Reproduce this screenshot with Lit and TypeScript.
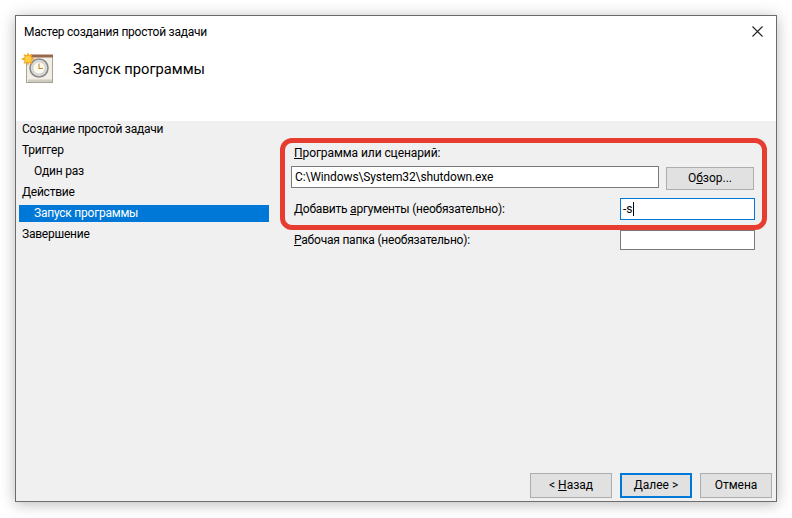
import { LitElement, html, css } from "lit";
import { customElement } from "lit/decorators.js";

@customElement("app-root")
export class AppRoot extends LitElement {
  static styles = css`
    :host { display: block; width: 792px; height: 518px; background: #fff; box-sizing: border-box; padding: 15px 15px 16px 15px; font-family: Roboto, "Open Sans", sans-serif; font-size: 12px; color: #000; overflow: hidden; }
    .win { position: relative; width: 762px; height: 487px; box-sizing: border-box; border: 1px solid #6b6b6b; border-bottom-color: #6f6f6f; background: #f0f0f0; box-shadow: 0 2px 14px rgba(0,0,0,.28); display: flex; flex-direction: column; }
    .head { height: 105px; background: #fff; display: flex; flex-direction: column; flex: none; }
    .titlebar { height: 30px; display: flex; align-items: center; justify-content: space-between; padding: 0 13px 0 8px; }
    .title-text { letter-spacing: -0.23px; padding-top: 1px; }
    .close { display: block; }
    .hero { display: flex; align-items: flex-start; padding: 6px 0 0 5px; }
    .hero-title { font-size: 14.7px; margin: 7px 0 0 19px; line-height: 20px; }
    .body { flex: 1; display: flex; min-height: 0; }
    .side { width: 253px; flex: none; padding: 0 0 0 3px; box-sizing: border-box; display: flex; flex-direction: column; gap: 4px; letter-spacing: -0.23px; }
    .step { height: 17px; line-height: 17px; padding-left: 3px; }
    .step.sub { padding-left: 15px; }
    .step.on { background: #0078d7; color: #fff; }
    .form { padding: 24px 0 0 22px; flex: 1; display: flex; flex-direction: column; }
    .lbl { line-height: 16px; padding-left: 3px; letter-spacing: -0.22px; }
    .lbl.first { letter-spacing: -0.08px; }
    .row1 { display: flex; gap: 7px; margin-top: 5px; }
    .inp { box-sizing: border-box; background: #fff; border: 1px solid #7a7a7a; height: 22px; line-height: 21px; padding-left: 3px; }
    .path { width: 368px; letter-spacing: -0.12px; }
    .browse, .btn { box-sizing: border-box; background: #e1e1e1; border: 1px solid #adadad; text-align: center; }
    .browse { width: 88px; height: 23px; line-height: 21px; margin-top: 1px; }
    .row2 { display: flex; justify-content: space-between; width: 464px; }
    .row2 .inp { width: 135px; }
    .args { margin-top: 8px; height: 22px; align-items: center; }
    .args .inp { border-color: #0078d7; padding-left: 0; display: flex; align-items: center; }
    .args .val { padding-left: 2px; }
    .caret { width: 1px; height: 14px; background: #000; }
    .work { margin-top: 10px; height: 20px; align-items: center; }
    .work .inp { height: 20px; }
    .foot { position: relative; height: 30px; flex: none; display: flex; justify-content: flex-end; gap: 8px; padding: 0 4px 5px 0; box-sizing: content-box; }
    .btn { height: 25px; line-height: 23px; margin-top: 7px; width: 72px; }
    .btn.back { width: 82px; }
    .btn.def { border: 2px solid #0078d7; line-height: 21px; }
    .mark { position: absolute; left: 264px; top: 122px; width: 487px; height: 92px; box-sizing: border-box; border: 5px solid #e73c30; border-radius: 12px; pointer-events: none; }
    .main { flex: 1; min-height: 0; display: flex; flex-direction: column; }
  `;

  render() {
    return html`
      <div class="win">
        <div class="head">
          <div class="titlebar">
            <span class="title-text">Мастер создания простой задачи</span>
            <svg class="close" width="11" height="11" viewBox="0 0 11 11"><path d="M.5.5l10 10M10.5.5l-10 10" stroke="#222" stroke-width="1.1" fill="none"/></svg>
          </div>
          <div class="hero">
            <svg width="33" height="32" viewBox="0 0 33 32">
              <rect x="5.5" y="3.5" width="26" height="27" fill="#f3efe6" stroke="#a9a396"/>
              <rect x="9" y="2.5" width="23" height="3" fill="#96684e"/>
              <rect x="7" y="27.5" width="24" height="2.5" fill="#cfcbc1"/>
              <circle cx="18" cy="16" r="9" fill="#dcdcdc" stroke="#8a8a8a" stroke-width="1.6"/>
              <circle cx="18" cy="16" r="6.2" fill="#fdfaf0" stroke="#b5b5b5" stroke-width=".6"/>
              <path d="M18 11.5V16.5h4" fill="none" stroke="#c78a2a" stroke-width="1.1"/>
              <path d="M7 0l1.2 3.2 3.3-1.2-1.2 3.3 3.7 1.7-3.7 1.7 1.2 3.3-3.3-1.2L7 14l-1.2-3.2-3.3 1.2 1.2-3.3L0 7l3.700-1.700L2.500 2l3.300 1.200z" fill="#f5a623"/>
              <circle cx="7" cy="7" r="3.200" fill="#ffcf3f"/>
            </svg>
            <div class="hero-title">Запуск программы</div>
          </div>
        </div>
        <div class="main">
          <div class="body">
            <div class="side">
              <div class="step">Создание простой задачи</div>
              <div class="step">Триггер</div>
              <div class="step sub">Один раз</div>
              <div class="step">Действие</div>
              <div class="step sub on">Запуск программы</div>
              <div class="step">Завершение</div>
            </div>
            <div class="form">
              <div class="lbl first"><u>П</u>рограмма или сценарий:</div>
              <div class="row1">
                <div class="inp path">C:\\Windows\\System32\\shutdown.exe</div>
                <div class="browse">О<u>б</u>зор...</div>
              </div>
              <div class="row2 args">
                <div class="lbl">Добавить <u>а</u>ргументы (необязательно):</div>
                <div class="inp"><span class="val">-s</span><span class="caret"></span></div>
              </div>
              <div class="row2 work">
                <div class="lbl"><u>Р</u>абочая папка (необязательно):</div>
                <div class="inp"></div>
              </div>
            </div>
          </div>
          <div class="foot">
            <div class="btn back">&lt; <u>Н</u>азад</div>
            <div class="btn def"><u>Д</u>алее &gt;</div>
            <div class="btn">Отмена</div>
          </div>
        </div>
        <div class="mark"></div>
      </div>
    `;
  }
}
